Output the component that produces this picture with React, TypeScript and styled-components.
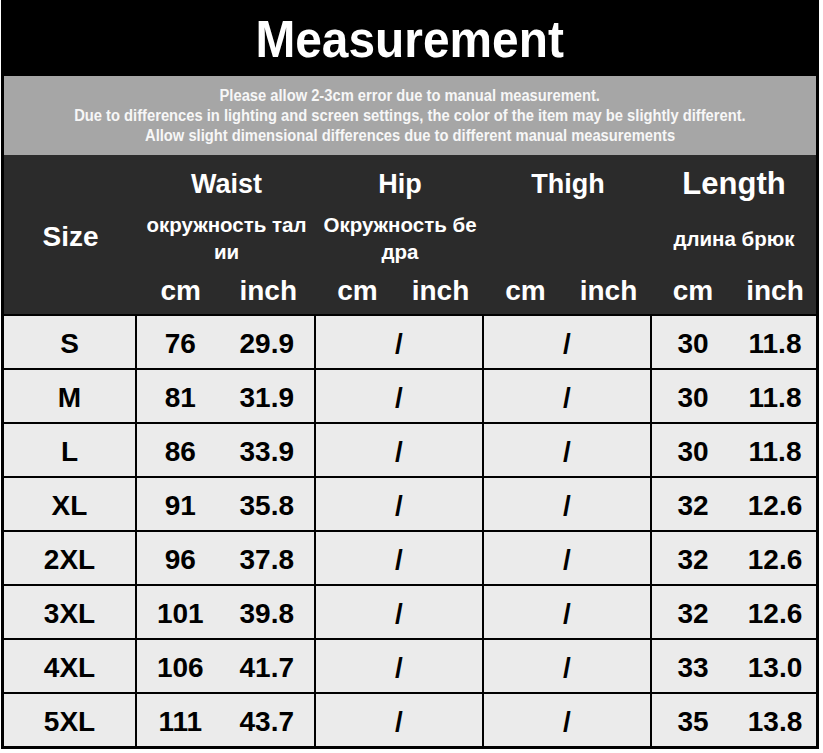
import React from 'react'
import styled, { createGlobalStyle } from 'styled-components'

type Row = {
    size: string
    waistCm: string
    waistInch: string
    lengthCm: string
    lengthInch: string
}

const rows: Array<Row> = [
    { size: 'S', waistCm: '76', waistInch: '29.9', lengthCm: '30', lengthInch: '11.8' },
    { size: 'M', waistCm: '81', waistInch: '31.9', lengthCm: '30', lengthInch: '11.8' },
    { size: 'L', waistCm: '86', waistInch: '33.9', lengthCm: '30', lengthInch: '11.8' },
    { size: 'XL', waistCm: '91', waistInch: '35.8', lengthCm: '32', lengthInch: '12.6' },
    { size: '2XL', waistCm: '96', waistInch: '37.8', lengthCm: '32', lengthInch: '12.6' },
    { size: '3XL', waistCm: '101', waistInch: '39.8', lengthCm: '32', lengthInch: '12.6' },
    { size: '4XL', waistCm: '106', waistInch: '41.7', lengthCm: '33', lengthInch: '13.0' },
    { size: '5XL', waistCm: '111', waistInch: '43.7', lengthCm: '35', lengthInch: '13.8' }
]

const notes = [
    'Please allow 2-3cm error due to manual measurement.',
    'Due to differences in lighting and screen settings, the color of the item may be slightly different.',
    'Allow slight dimensional differences due to different manual measurements'
]

const App: React.FunctionComponent = () => (
    <>
        <GlobalStyle />
        <Sheet>
            <TitleBar>
                <Squeezed $scale={0.92}>Measurement</Squeezed>
            </TitleBar>
            <Notes>
                {notes.map(line => (
                    <NoteLine key={line}>
                        <Squeezed $scale={0.92}>{line}</Squeezed>
                    </NoteLine>
                ))}
            </Notes>
            <HeadRow>
                <SizeHead>Size</SizeHead>
                <Group $width={179}>
                    <GroupTitle>Waist</GroupTitle>
                    <Russian>
                        окружность тал
                        <br />
                        ии
                    </Russian>
                    <Units $shift={4}>
                        <span>cm</span>
                        <span>inch</span>
                    </Units>
                </Group>
                <Group $width={168}>
                    <GroupTitle>Hip</GroupTitle>
                    <Russian>
                        Окружность бе
                        <br />
                        дра
                    </Russian>
                    <Units $shift={2}>
                        <span>cm</span>
                        <span>inch</span>
                    </Units>
                </Group>
                <Group $width={168}>
                    <GroupTitle>Thigh</GroupTitle>
                    <Russian />
                    <Units $shift={2}>
                        <span>cm</span>
                        <span>inch</span>
                    </Units>
                </Group>
                <Group $width={164}>
                    <GroupTitle $big>Length</GroupTitle>
                    <Russian>длина брюк</Russian>
                    <Units $shift={0}>
                        <span>cm</span>
                        <span>inch</span>
                    </Units>
                </Group>
            </HeadRow>
            <Body>
                {rows.map(row => (
                    <React.Fragment key={row.size}>
                        <Cell>{row.size}</Cell>
                        <SplitCell $shift={4}>
                            <span>{row.waistCm}</span>
                            <span>{row.waistInch}</span>
                        </SplitCell>
                        <Cell>/</Cell>
                        <Cell>/</Cell>
                        <SplitCell $shift={0}>
                            <span>{row.lengthCm}</span>
                            <span>{row.lengthInch}</span>
                        </SplitCell>
                    </React.Fragment>
                ))}
            </Body>
        </Sheet>
    </>
)

export default App

const GlobalStyle = createGlobalStyle`
    body {
        margin: 0;
        background: #ffffff;
        font-family: "Liberation Sans", Arial, sans-serif;
    }
`

const Sheet = styled.div`
    width: 812px;
    margin-left: 1px;
    border: 3px solid #000000;
    border-top: none;
    font-weight: 700;
`

const Squeezed = styled.span<{ $scale: number }>`
    display: inline-block;
    white-space: nowrap;
    transform: scaleX(${({ $scale }) => $scale});
`

const TitleBar = styled.div`
    height: 76px;
    background: #000000;
    color: #ffffff;
    font-size: 52px;
    display: flex;
    align-items: center;
    justify-content: center;
    padding-top: 2px;
    box-sizing: border-box;
`

const Notes = styled.div`
    height: 79px;
    background: #a6a6a6;
    color: #f7f7f7;
    font-size: 16px;
    display: flex;
    flex-direction: column;
    justify-content: center;
    align-items: center;
    box-sizing: border-box;
`

const NoteLine = styled.div`
    line-height: 20px;
    text-align: center;
`

const HeadRow = styled.div`
    display: flex;
    height: 159px;
    background: #2b2b2b;
    color: #ffffff;
    border-bottom: 2px solid #000000;
`

const SizeHead = styled.div`
    width: 133px;
    font-size: 28px;
    display: flex;
    align-items: center;
    justify-content: center;
    padding-top: 4px;
    box-sizing: border-box;
`

const Group = styled.div<{ $width: number }>`
    width: ${({ $width }) => $width}px;
    display: grid;
    grid-template-rows: 56px 54px 49px;
`

const GroupTitle = styled.div<{ $big?: boolean }>`
    font-size: ${({ $big }) => ($big ? 31 : 27)}px;
    display: flex;
    align-items: center;
    justify-content: center;
    padding-top: 2px;
`

const Russian = styled.div`
    font-size: 20.5px;
    line-height: 27px;
    display: flex;
    align-items: center;
    justify-content: center;
    text-align: center;
`

const Units = styled.div<{ $shift: number }>`
    display: grid;
    grid-template-columns: 1fr 1fr;
    padding-right: ${({ $shift }) => $shift}px;
    padding-top: 3px;
    font-size: 28px;

    span {
        display: flex;
        align-items: center;
        justify-content: center;
    }
`

const Body = styled.div`
    display: grid;
    grid-template-columns: 131px 177px 166px 166px 164px;
    grid-auto-rows: 52px;
    gap: 2px;
    background: #000000;
    color: #000000;
    font-size: 28px;
`

const Cell = styled.div`
    background: #ebebeb;
    display: flex;
    align-items: center;
    justify-content: center;
    padding-top: 3px;
`

const SplitCell = styled.div<{ $shift: number }>`
    background: #ebebeb;
    display: grid;
    grid-template-columns: 1fr 1fr;
    padding-right: ${({ $shift }) => $shift}px;
    padding-top: 3px;

    span {
        display: flex;
        align-items: center;
        justify-content: center;
    }
`
